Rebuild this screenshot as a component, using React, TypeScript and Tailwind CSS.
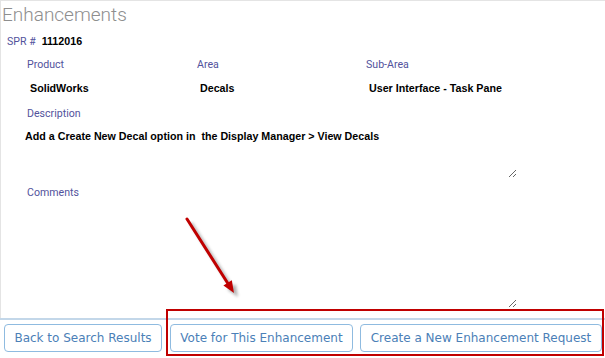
import React from "react";

const roboto = { fontFamily: "Roboto, 'Noto Sans', sans-serif" };
const arial = { fontFamily: "'Liberation Sans', Arial, sans-serif" };
const verdana = { fontFamily: "'DejaVu Sans', Verdana, sans-serif" };

function Label({ children }: { children: React.ReactNode }) {
  return (
    <div className="text-[10.6px] leading-[14px] h-[14px] text-[#52529c]" style={roboto}>
      {children}
    </div>
  );
}

function Value({ children }: { children: React.ReactNode }) {
  return (
    <div className="text-[10.7px] leading-[14px] h-[14px] font-bold text-black pl-[2px]" style={arial}>
      {children}
    </div>
  );
}

export default function App() {
  return (
    <div className="w-[605px] h-[358px] relative overflow-hidden bg-white">
      <div className="h-[318px] border-l border-t border-[#e4e4e4] flex flex-col">
        <h1
          className="mt-[2px] pl-[1px] text-[19px] font-light leading-[24px] h-[24px] text-[#8e8e8e]"
          style={roboto}
        >
          Enhancements
        </h1>

        <div className="mt-[7px] ml-[6px] flex items-baseline h-[14px]">
          <span className="text-[10.6px] leading-[14px] text-[#52529c]" style={roboto}>
            SPR #
          </span>
          <span className="ml-[6px] text-[10.7px] leading-[14px] font-bold text-black" style={arial}>
            1112016
          </span>
        </div>

        <div className="mt-[10px] ml-[26px] grid grid-cols-[170px_169px_1fr]">
          <Label>Product</Label>
          <Label>Area</Label>
          <Label>Sub-Area</Label>
        </div>
        <div className="mt-[9px] ml-[27px] grid grid-cols-[170px_169px_1fr]">
          <Value>SolidWorks</Value>
          <Value>Decals</Value>
          <Value>User Interface - Task Pane</Value>
        </div>

        <div className="mt-[12px] ml-[26px]">
          <Label>Description</Label>
        </div>
        <textarea
          readOnly
          className="mt-[6px] ml-[22px] w-[494px] h-[51px] px-[2px] pt-[2px] resize bg-transparent border-0 outline-none text-[10.7px] leading-[14px] font-bold text-black"
          style={arial}
          defaultValue="Add a Create New Decal option in  the Display Manager > View Decals"
        />

        <div className="mt-[8px] ml-[26px]">
          <Label>Comments</Label>
        </div>
        <textarea
          readOnly
          className="mt-[2px] ml-[22px] w-[494px] h-[106px] px-[2px] pt-[2px] resize bg-transparent border-0 outline-none text-[10.7px] leading-[14px] font-bold text-black"
          style={arial}
          defaultValue=""
        />
      </div>

      <div className="border-t-2 border-[#c3d7e9] pt-[4px] pl-[4px] flex">
        <button
          className="w-[158px] h-[28px] rounded-[4px] border border-[#8fbbe0] text-[12px] text-[#4b80b7] bg-white"
          style={verdana}
        >
          Back to Search Results
        </button>
        <button
          className="ml-[8px] w-[183px] h-[28px] rounded-[4px] border border-[#8fbbe0] text-[12px] text-[#4b80b7] bg-white"
          style={verdana}
        >
          Vote for This Enhancement
        </button>
        <button
          className="ml-[7px] w-[242px] h-[28px] rounded-[4px] border border-[#8fbbe0] text-[12px] text-[#4b80b7] bg-white"
          style={verdana}
        >
          Create a New Enhancement Request
        </button>
      </div>

      <div className="absolute left-[166px] top-[309px] w-[438px] h-[47px] border-2 border-[#c00000] pointer-events-none" />

      <svg
        className="absolute left-0 top-0 pointer-events-none"
        width="605"
        height="358"
        viewBox="0 0 605 358"
      >
        <defs>
          <filter id="blur" x="-20%" y="-20%" width="140%" height="140%">
            <feGaussianBlur stdDeviation="1.6" />
          </filter>
        </defs>
        <g transform="translate(4 4)" filter="url(#blur)" opacity="0.45">
          <line x1="187" y1="219" x2="227.6" y2="283" stroke="#555" strokeWidth="3" />
          <polygon points="234,293 223.4,285.6 231.8,280.2" fill="#555" />
        </g>
        <line x1="187" y1="219" x2="227.6" y2="283" stroke="#c00000" strokeWidth="3" strokeLinecap="round" />
        <polygon points="234,293 223.4,285.6 231.8,280.2" fill="#c00000" />
      </svg>
    </div>
  );
}
